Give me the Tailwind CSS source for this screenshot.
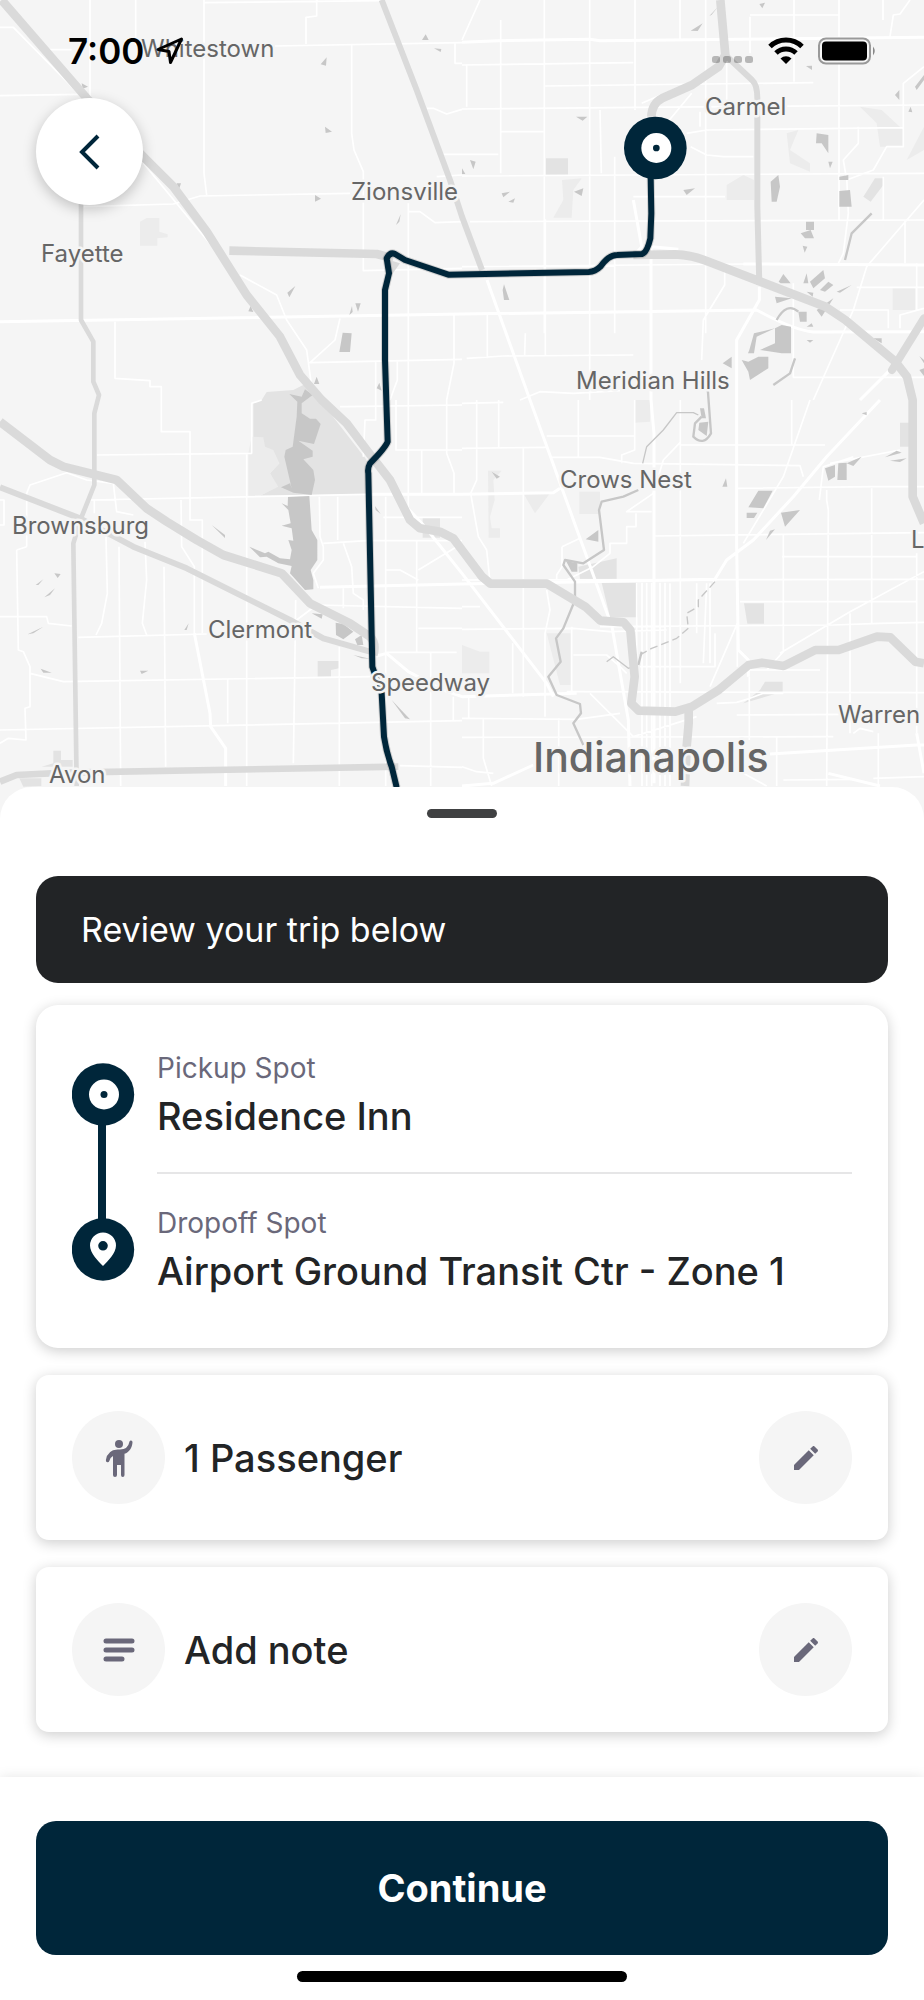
<!DOCTYPE html>
<html lang="en">
<head>
<meta charset="utf-8">
<meta name="viewport" content="width=device-width, initial-scale=1">
<title>Review your trip</title>
<script src="https://cdn.jsdelivr.net/npm/@tailwindcss/browser@4"></script>
</head>
<body class="bg-white font-['Inter','Liberation_Sans',sans-serif] text-[#222426]">
<main class="relative flex min-h-screen flex-col">

  <section class="relative h-[819px] w-full overflow-hidden bg-[#f5f5f5]" aria-label="Trip map">
    <svg class="block h-full w-full" viewBox="0 0 924 819" preserveAspectRatio="xMidYMin slice" role="img" aria-label="Route from Carmel towards the airport">
      <g transform="scale(.333333)" fill="none" stroke-linejoin="round">
        <!-- parks -->
        <g fill="#ececec">
          <path d="M420 665L440 654H478V695L503 703V712L472 715V737H420Z"/>
          <path d="M1686 540L1745 535 1720 570 1715 653H1660L1690 600Z"/>
          <path d="M2180 555L2230 525 2262 540V600H2180ZM2360 400L2395 390 2370 450 2430 490V515L2370 490ZM2580 320L2645 330 2710 390V440H2640L2630 370ZM2678 865H2745V930H2678ZM2720 480L2772 380V450Z"/>
          <path d="M1464 1412H1505L1480 1440 1484 1500 1470 1550 1475 1585H1500V1613H1466ZM1570 1480H1650L1605 1540ZM1738 1475H1800V1542H1738ZM1904 1200H1950V1265L1904 1268ZM1386 1935L1440 1955H1468V2020H1386ZM1640 1900H1712V2055H1680Z"/>
        </g>
        <g fill="#e3e3e3">
          <path d="M785 1200L800 1176 880 1170 920 1150 960 1200 1100 1380V1483L780 1487 830 1460 810 1420 838 1390 760 1310V1210Z"/>
          <path d="M1268 1552H1320V1613H1268ZM953 1983H1017V2005L993 2010V2030H953ZM160 2252H183V2280H218V2300H125L160 2290ZM58 2335H124V2358L70 2360Z"/>
          <path d="M1638 475H1704V524H1638ZM2590 590L2625 535H2650V555L2612 605ZM1735 1700L1850 1675V1737H1740ZM1805 1748H1912V1852H1830ZM2232 1810H2292V1871H2242ZM2280 2070L2295 2045H2348V2075L2230 2110ZM2700 1268H2740V1340H2700Z"/>
        </g>
        <path fill="#ececec" d="M755 1310L790 1312 795 1340 820 1350 838 1390 810 1420 835 1460 780 1487 745 1487V1360Z"/>

        <!-- minor streets -->
        <g stroke="#fff" stroke-width="5">
          <path d="M0 82H40L240 285M150 149H215M270 0V290M407 0V135M612 0V520L620 585M612 8L1140 2M950 0V48L918 52V132M825 138L1386 128M1055 132V400L1062 450 1090 515V812L1386 805M0 287L240 283M250 620L520 612 600 588 1050 580M430 490L650 755M720 825L830 885 860 960 920 1050 935 1160M345 965V1135L450 1142V1160H484V1295H570V1560H607V1900M1020 955L1005 1020 930 1088 1386 1078M1225 610V1550M1225 635H1260L1305 668 1386 665M1280 325H1300L1340 342 1386 328M1365 128V190H1386M1330 463H1386M1362 945V1090L1340 1200V1360L1362 1420V1480M1127 1085V1260H1095L1090 1370M1192 1085V1140L1170 1200M1188 1200V1350H1386M1310 530L1386 525"/>
          <path d="M1386 195L1900 188M1400 195V320M1636 258L2440 248M1386 327L1910 322 2772 315M1503 395H1630M1502 60V520M1633 0V1000M1386 463H1495M1386 528L2772 520M1800 330L1804 520M1769 0V1200M1844 470V1000M1905 0V330M1900 590H2175M2040 0V120M2117 0V1000M2180 120V320M2250 45H2515M2250 160V50M2517 0V660M2382 0V245M2649 0V60M1410 665L2772 660M1636 658V1065M1386 800L2240 792M1400 1075L1510 1068 1900 1065M1462 945V1075M1576 1000 1574 1065M2060 400L2120 390 2710 383M2072 440L2120 465 2170 470H2260M2075 280L2000 370M1925 310L2030 265M2100 335V380M2174 790V855L2110 960 2105 1080M1386 120L1440 0M2772 200L2710 250 2710 440H2660L2620 510 2540 540 2530 480 2575 430V380M2540 530L2545 640 2530 760 2515 790M2650 530V660M2772 600L2600 800 2560 930 2440 1200M2570 862H2772M2520 930H2665V985M2700 985V945L2772 925M2380 850V1130M2378 1132H2772M2670 110L2680 45 2700 42 2730 0M2715 660V790M2750 790V930M1560 1200L1620 1175 1720 1180 1860 1172"/>
          <path d="M0 1500H12V1575H0M80 1640V1480L90 1455 200 1418 260 1440 340 1450 350 1535 400 1545M290 1365L755 1360V1210L785 1200M270 1500L1100 1483M740 1360V2358M543 1500L545 1640 583 1700V1900M283 1500V1540M50 1650 80 1640M50 1650 55 1950 70 1955 90 2000V2120L75 2125 78 2220 25 2215 0 2230M0 1850H140L145 1870 215 1878M318 1610L322 1780 305 1870 288 1905M357 1640 362 2358M435 1625 440 1740 427 1870 440 1905M492 1700 497 2300M235 1912 620 1902M90 2020 190 2045 1110 2030M0 2190 1386 2162M683 2035V2170M887 1800 885 1960 880 2290M1018 1940V2358M890 1860 950 1815 1386 1825M958 1490 960 1610 970 1640V1680L940 1720 955 1765M1013 1490V1620M970 1630 1100 1622M1030 1630 1055 1700 1060 1780 1090 1800V1830M1030 1765V1825M1157 1490V2358M1150 1552H1386M1265 1350V1480M1020 1220 1040 1220 1386 1215M1250 1620V1955M1100 1622H1386M1157 1710H1200L1255 1740M1370 1640 1255 1710M1255 1885H1386M1160 1957H1370M1292 1957V2358M1360 2090V2160M1200 2297 1386 2302"/>
          <path d="M1430 1200V1440L1412 1480 1435 1610 1460 1650 1470 1745M1386 1345 1640 1342M1496 1200V1342M1386 1210 1510 1207M1570 1345V2090M1640 1308H1905M1656 1372H1800L1900 1390 2400 1397 2410 1430M1735 1200V1370M1904 1200V1350L1865 1365V1390M2041 1200V2050M2375 1200V1335M2040 1335H2475M2040 1328 1990 1380 1960 1480 1880 1535H1955M2210 1465 2620 1460M2430 1200 2350 1430 2230 1630M2620 1460H2772M2615 1465V1870M2480 1470V1500L2485 1530 2480 2358M2490 1390 2700 1350M2458 1500 2470 1400 2560 1370M2350 1605V1955L2300 2010M2346 1670H2750M2750 1660V2200M1908 1540V1580H1880V1630H1830V1660L1780 1700 1700 1740M1686 1640 1740 1615M1686 1640V1700L1670 1725V1740M1960 1608 2772 1598M1386 1740 2772 1738M2220 1805H2750M1800 1880 2500 1875 2640 1870 2772 1867M1386 1888 1720 1885 1830 1895 2000 1890M1386 1820H1440M1538 1930V2080M1640 1770 1650 1830 1635 1900V2150M1715 1880V2075M1720 1965H1820L1860 2000 1880 2020M2130 1750V1990M2120 1750 2110 1990M2010 1750V2358M2090 1750V1900M2212 2000V1870L2130 2060M1920 2000H2145V1900M1926 1748V2358M1940 1748V2358M1955 1748V2358M1980 1748V2358M1995 1748V2358M1910 1748V2000M1700 2075 2772 2078M1770 2080 1900 2210 2090 2150M1386 2155 1730 2158 1860 2140M1386 2212 2500 2210M1386 2300 1430 2315 1480 2320M1450 2158V2275L1475 2358M1676 2155V2358M1406 2090V2158M2248 2030V2220M2330 2210V2358M2340 1960 2550 1835 2772 1715M2550 1840V2200M2635 2200V2358M2460 2010 2230 2010 2180 2060M2210 2145 2560 2143M2150 2110 2210 2107 2250 2095 2290 2080H2350M2560 2200 2580 2185 2620 2195M2350 2340 2560 2338M2230 2320 2300 2358M2620 2335 2772 2330"/>
        </g>
        <!-- wider streets -->
        <g stroke="#fff" stroke-width="9">
          <path d="M0 965L1386 942 2270 930Q2380 990 2440 996L2772 995M1386 127L1495 122 1770 118 1800 122 2772 112M1461 840L1590 1200 1836 1880 1885 2160 1890 2358M2230 792 2772 795M2278 860V900L2210 1020V1640L2215 1950 2245 1980V2030M2640 1200 2480 1370 2380 1490 2260 1620 2180 1680 2140 1745M2580 1200 2690 1090M1953 740V1200L1962 1300V2350M1100 1483H1386L1660 1478 1680 1465M960 1762 1386 1752 2150 1738M583 1900 630 2140 632 2180 677 2245V2358M1200 1500 1270 1575 1386 1720 1640 2050 1660 2090M1130 1968 1160 1960 1225 2015 1330 2070 1386 2090 1730 2080M1386 2358 1480 2350 1600 2295M2485 2320 2640 2358M2310 2262 2750 2235 2772 2235M2750 2200 2772 2320M1900 600 1925 740 1900 770M1955 740 2035 748"/>
        </g>

        <!-- water -->
        <g fill="#c7c7c7">
          <path d="M868 1182 905 1190 915 1168 938 1185 905 1210V1240L930 1256H948L962 1272 942 1332 895 1322 938 1352V1370L910 1378 940 1410 945 1440 935 1485 880 1478 843 1462 870 1450 875 1465 853 1370 857 1350 878 1340 890 1250 892 1205Z"/>
          <path d="M864 1491 928 1488 935 1590 952 1620V1680L932 1710 940 1740V1768L915 1770 870 1720 875 1698 835 1690 800 1670 780 1672 748 1640 795 1660 805 1655 840 1675 870 1678 875 1650 865 1620 880 1622 875 1585 845 1577 872 1570 865 1530 845 1510 863 1518Z"/>
          <path d="M1028 998 1055 1000 1050 1056H1018ZM862 878 886 858 868 892ZM962 193 980 172 978 197ZM975 380 996 395 977 399ZM1266 120 1277 103 1286 120ZM1302 145 1324 147 1322 156ZM245 250 264 260 248 266ZM945 585 963 596 945 605ZM530 550H543L537 568ZM745 934 752 918 760 936ZM942 1152 950 1130 958 1152ZM1066 910H1082L1074 935ZM1048 945 1056 918 1058 936ZM1188 675 1202 643 1198 665ZM1130 1165 1138 1148 1145 1172Z"/>
          <path d="M1996 93ZM2128 48 2154 20 2135 44ZM2072 92 2108 70 2093 93ZM2278 12 2295 8 2287 25ZM1728 350H1762L1748 362ZM1722 575 1750 565 1745 588ZM2050 570 2085 565 2060 585ZM1386 505 1396 522H1386ZM1410 480 1427 485 1420 508ZM1505 580 1530 575 1510 592ZM1525 605 1545 595 1540 608ZM1508 870 1512 853 1528 900H1512ZM2312 545 2335 525 2340 560 2330 605H2315ZM2450 400 2485 405V460L2465 430 2448 430ZM2485 485H2498L2490 505ZM2518 530 2545 525V540H2518ZM2518 573 2550 570 2555 620H2518ZM2418 665H2442V690H2418ZM2402 700 2432 690 2442 715H2415ZM2408 737 2422 740 2414 758ZM2745 260 2772 225V240L2750 270ZM2685 285 2698 270V300ZM2725 335 2732 320 2737 337ZM2418 198 2436 197V210Z"/>
          <path d="M2336 845 2350 822 2372 850H2342ZM2410 850 2420 820 2425 850ZM2430 845 2470 810 2475 835 2440 865ZM2460 870 2485 845 2500 855 2475 875ZM2325 890 2375 895 2330 910ZM2420 875 2440 878 2438 890ZM2450 930 2500 895 2465 950ZM2395 935H2420V965H2400ZM2420 980 2435 970 2440 980ZM2325 985 2345 975 2373 980V1060H2345L2280 1050 2325 1030ZM2248 1050 2262 1000 2325 985 2270 1010 2262 1060H2244ZM2225 1080 2245 1085 2275 1070H2305V1105L2250 1140 2245 1115ZM2168 1090 2195 1070V1105ZM2420 1020H2440L2430 1028ZM2620 1015H2645V1030ZM2510 875 2555 855 2520 878ZM2758 1068 2772 1080V1090ZM2758 1110 2772 1105V1128Z"/>
          <path d="M635 1575 675 1605V1614ZM107 1755 130 1738 115 1755ZM133 1792 165 1765 150 1785ZM163 1720 182 1722 173 1734ZM83 1903 130 1880 100 1900ZM122 2006 155 2018H130ZM420 2012H445L425 2022ZM553 1890 566 1870 560 1890ZM1007 1868 1030 1872 1060 1895 1030 1918 1008 1905ZM1065 1918 1085 1905 1090 1935H1072ZM935 1840 968 1843 965 1856ZM1175 2100 1230 2158 1215 2155ZM1310 2183 1386 2215ZM1125 1518 1142 1542 1127 1530ZM1060 1965 1110 1976 1085 1975Z"/>
          <path d="M1698 1683 1732 1690V1715H1715ZM1757 1618 1795 1590V1625ZM2245 1522 2275 1472H2318L2290 1525ZM2240 1538H2272L2262 1554H2240ZM2343 1538 2400 1530 2355 1580ZM2298 1620 2310 1592 2325 1588ZM2475 1405 2505 1395V1430L2485 1442ZM2515 1390 2540 1388V1440H2512ZM2540 1390 2585 1370 2560 1398ZM2655 1372 2690 1352 2705 1358ZM2670 1382 2720 1375 2700 1386ZM1475 1415 1500 1430 1490 1436ZM2100 1225H2112L2118 1255H2105ZM2098 1268 2125 1265 2120 1308 2095 1290ZM2167 1460 2178 1435 2182 1460ZM2585 1240 2600 1236V1246Z"/>
        </g>
        <g stroke="#c7c7c7" stroke-width="7">
          <path d="M2122 1150 2133 1300Q2110 1340 2080 1310L2085 1270 2105 1250M1915 1470 1870 1490 1805 1505 1797 1530 1812 1650 1750 1690 1695 1680 1690 1695 1725 1745V1800L1690 1885 1668 1915 1682 1985 1645 2030 1670 2085 1740 2112 1743 2140 1720 2170 1750 2235M1915 1995 1925 1955M2615 640 2555 700 2535 780M2330 960Q2360 905 2395 935M2385 1075 2370 1120 2320 1155"/>
          <path stroke-width="4" d="M2095 1245 2080 1238 2030 1238 1990 1290 1940 1340 1928 1390M1820 1985 1840 1970 1885 2005 1900 2000"/>
          <path stroke-width="4" stroke-dasharray="24 12" d="M2145 1745 2095 1800V1820L2060 1840 2065 1885 2030 1915 1955 1945 1920 1965"/>
        </g>

        <!-- highways -->
        <g stroke="#dadada">
          <path stroke-width="26" d="M5 0L265 300 440 480 520 560 620 695 740 885 840 1010 900 1125 965 1200 1040 1270 1100 1350 1170 1440 1230 1560 1260 1585 1320 1595 1360 1615 1386 1650 1446 1730 1471 1751H1641L1756 1820 1801 1862 1871 1867 1891 1890 1904 2030 1894 2110 1916 2132 2026 2135 2076 2120 2156 2070 2246 1995 2286 1988 2351 1998 2446 1950 2516 1950 2631 1910 2671 1912 2746 1985 2772 1990"/>
          <path stroke-width="26" d="M688 752L1130 762 1180 775M1900 765L2026 763Q2076 765 2126 785L2476 920 2536 960 2686 1085 2721 1130 2738 1200V1490L2772 1570M2161 0L2176 165 2156 200 2076 255 1986 295Q1956 310 1954 350M2066 2120V2170L2060 2240 2055 2358M0 1265L150 1380 190 1400 350 1440 440 1525 500 1565 590 1620 670 1665 845 1720 930 1810 1050 1870 1110 1910Q1130 1930 1120 1965"/>
          <path stroke-width="24" stroke-linecap="round" d="M2676 1110L2772 955"/>
          <path stroke-width="18" d="M1145 0L1250 270 1350 540 1386 650 1446 810M2176 165L2256 240Q2273 255 2272 300V620L2278 855M0 1462L240 1555 400 1640 560 1705 870 1860 970 1915 1110 1955"/>
          <path stroke-width="20" d="M0 2345L50 2325 200 2318 1195 2300"/>
          <path stroke-width="14" d="M243 610V960L280 1025V1145L297 1185 283 1240V1455L245 1550 220 1630 230 2358"/>
        </g>
        <path fill="#dadada" d="M1150 775 1200 790 1175 825Z"/>

        <!-- trip route -->
        <path stroke="#000" stroke-opacity=".15" stroke-width="24" d="M1190 2362L1175 2300Q1160 2260 1152 2210L1145 2080 1117 2000 1105 1420Q1102 1405 1110 1390 1155 1345 1163 1325L1155 1080V870L1167 820 1160 775Q1170 755 1185 762L1215 780 1345 824 1766 816Q1786 815 1801 800 1826 765 1851 765L1926 762Q1941 758 1951 715L1954 640 1952 530"/>
        <path stroke="#00263a" stroke-width="18" d="M1190 2362L1175 2300Q1160 2260 1152 2210L1145 2080 1117 2000 1105 1420Q1102 1405 1110 1390 1155 1345 1163 1325L1155 1080V870L1167 820 1160 775Q1170 755 1185 762L1215 780 1345 824 1766 816Q1786 815 1801 800 1826 765 1851 765L1926 762Q1941 758 1951 715L1954 640 1952 530"/>
        <circle cx="1966" cy="444" r="94" fill="#00263a"/>
        <circle cx="1969" cy="444" r="45" fill="#fff"/>
        <circle cx="1969" cy="444" r="10" fill="#00263a"/>
      </g>
      <g font-size="24" fill="#666" stroke="#f5f5f5" stroke-width="5" stroke-linejoin="round" paint-order="stroke">
        <text x="141" y="57">Whitestown</text>
        <text x="351" y="200">Zionsville</text>
        <text x="41" y="262">Fayette</text>
        <text x="705" y="115">Carmel</text>
        <text x="576" y="389">Meridian Hills</text>
        <text x="560" y="488">Crows Nest</text>
        <text x="12" y="534">Brownsburg</text>
        <text x="208" y="638">Clermont</text>
        <text x="371" y="691">Speedway</text>
        <text x="838" y="723">Warren</text>
        <text x="49" y="783">Avon</text>
        <text x="911" y="548">L</text>
        <text x="533" y="772" font-size="41" font-weight="500">Indianapolis</text>
      </g>
    </svg>

    <!-- status bar -->
    <div class="absolute inset-x-0 top-0 flex items-center justify-between pt-[29px] pr-[46px] pl-[68px] text-black">
      <div class="flex items-center gap-3">
        <time class="text-[35px] leading-[44px] font-semibold">7:00</time>
        <svg class="h-7 w-7" viewBox="0 0 28 28" fill="none" stroke="#000" stroke-width="3" stroke-linejoin="round" aria-hidden="true"><path d="M25.500 2L2 12.500 13 14.500 14.500 25.500Z"/></svg>
      </div>
      <div class="flex items-center gap-[14px]">
        <svg class="h-7 w-[42px]" viewBox="0 0 42 28" fill="#000" fill-opacity=".25" aria-hidden="true"><rect y="19" width="8" height="7" rx="2.500"/><rect x="11" y="19" width="8" height="7" rx="2.500"/><rect x="22" y="19" width="8" height="7" rx="2.500"/><rect x="33" y="19" width="8" height="7" rx="2.500"/></svg>
        <svg class="h-7 w-9" viewBox="0 0 36 28" aria-hidden="true"><g fill="none" stroke="#000" stroke-width="5"><path d="M2 9.500A23 23 0 0 1 34 9.500"/><path d="M8 16A14.500 14.500 0 0 1 28 16"/></g><path d="M18 27L12.500 21.500A8 8 0 0 1 23.500 21.500Z"/></svg>
        <svg class="h-7 w-[60px]" viewBox="0 0 60 28" aria-hidden="true"><rect x="1" y="1.500" width="51" height="25" rx="7" fill="#f5f5f5" stroke="#999" stroke-width="2"/><rect x="4" y="4.500" width="45" height="19" rx="4"/><path d="M55 9.500Q58.500 14 55 18.500Z" fill="#888"/></svg>
      </div>
    </div>

    <button type="button" aria-label="Back" class="absolute top-[98px] left-9 flex h-[107px] w-[107px] items-center justify-center rounded-full bg-white shadow-[0_4px_14px_rgba(0,0,0,0.22)]">
      <svg class="h-10 w-10" viewBox="0 0 40 40" fill="none" stroke="#00263a" stroke-width="4" stroke-linejoin="miter" aria-hidden="true"><path d="M28 4L12 20L28 36"/></svg>
    </button>
  </section>

  <section class="relative -mt-8 flex flex-1 flex-col rounded-t-[32px] bg-white px-9 pb-[45px]">
    <div class="mx-auto mt-[22px] h-[9px] w-[70px] rounded-full bg-[#404142]"></div>
    <h1 class="mt-[58px] rounded-[22px] bg-[#222426] px-[45px] py-[30px] text-[34px] leading-[47px] font-normal text-white">Review your trip below</h1>

    <div class="mt-[22px] flex gap-[22px] rounded-[22px] bg-white px-9 pt-[43px] pb-[52px] shadow-[0_3px_14px_rgba(0,0,0,0.2)]">
      <svg class="mt-[15px] h-[218px] w-[63px] shrink-0" viewBox="0 0 63 218" aria-hidden="true">
        <path d="M26 31H34V187H26Z" fill="#00263a"/>
        <circle cx="31" cy="31.500" r="31.200" fill="#00263a"/><circle cx="32" cy="31.500" r="15" fill="#fff"/><circle cx="32" cy="31.500" r="3.500" fill="#00263a"/>
        <circle cx="31" cy="186.500" r="31.200" fill="#00263a"/>
        <path fill="#fff" fill-rule="evenodd" d="M31 203C26 198 18 190 18 182.500A13 13 0 0 1 44 182.500C44 190 36 198 31 203ZM31 178A4.800 4.800 0 1 0 31 187.600A4.800 4.800 0 1 0 31 178Z"/>
      </svg>
      <dl class="min-w-0 flex-1">
        <div class="border-b-2 border-[#e6e6e7] pb-[31px]">
          <dt class="text-[28px] leading-10 text-[#6a687a]">Pickup Spot</dt>
          <dd class="mt-[3px] text-[38px] leading-[50px] font-medium">Residence Inn</dd>
        </div>
        <div class="pt-[29px]">
          <dt class="text-[28px] leading-10 text-[#6a687a]">Dropoff Spot</dt>
          <dd class="mt-[3px] text-[38px] leading-[50px] font-medium">Airport Ground Transit Ctr - Zone 1</dd>
        </div>
      </dl>
    </div>

    <div class="mt-[27px] flex items-center rounded-[13px] bg-white p-9 shadow-[0_3px_14px_rgba(0,0,0,0.2)]">
      <span class="flex h-[93px] w-[93px] items-center justify-center rounded-full bg-[#f5f5f5]">
        <svg class="h-10 w-10" viewBox="0 0 40 40" fill="#6a687a" aria-hidden="true"><circle cx="20" cy="6" r="4"/><path d="M30.500 3.500Q31 2.500 32 2.600 33.600 2.800 33.500 4.500C33 10 30 14.500 25.500 15.800V37Q25.500 39 23.700 39 22 39 22 37V27H18V37Q18 39 16 39 14 39 14 37V18Q11 19.500 10.300 23 9.800 24.600 8.300 24.300 6.500 24 6.900 22 8.500 12 18.500 11.500H21Q29 11.500 30.500 3.500Z"/></svg>
      </span>
      <span class="ml-[19px] flex-1 text-[38px] leading-[50px] font-medium">1 Passenger</span>
      <button type="button" aria-label="Edit passengers" class="flex h-[93px] w-[93px] items-center justify-center rounded-full bg-[#f5f5f5]">
        <svg class="h-8 w-8" viewBox="0 0 24 24" fill="#6a687a" aria-hidden="true"><path d="M3 17.250V21h3.750L17.810 9.940l-3.750-3.750L3 17.250zM20.710 7.040c.39-.39.39-1.020 0-1.410l-2.340-2.340c-.39-.39-1.020-.39-1.410 0l-1.830 1.830 3.750 3.750 1.830-1.830z"/></svg>
      </button>
    </div>

    <div class="mt-[27px] flex items-center rounded-[13px] bg-white p-9 shadow-[0_3px_14px_rgba(0,0,0,0.2)]">
      <span class="flex h-[93px] w-[93px] items-center justify-center rounded-full bg-[#f5f5f5]">
        <svg class="h-8 w-8" viewBox="0 0 32 32" stroke="#6a687a" stroke-width="5" stroke-linecap="round" aria-hidden="true"><path d="M3 7H29M3 16H29M3 25H19"/></svg>
      </span>
      <span class="ml-[19px] flex-1 text-[38px] leading-[50px] font-medium">Add note</span>
      <button type="button" aria-label="Edit note" class="flex h-[93px] w-[93px] items-center justify-center rounded-full bg-[#f5f5f5]">
        <svg class="h-8 w-8" viewBox="0 0 24 24" fill="#6a687a" aria-hidden="true"><path d="M3 17.250V21h3.750L17.810 9.940l-3.750-3.750L3 17.250zM20.710 7.040c.39-.39.39-1.020 0-1.410l-2.340-2.340c-.39-.39-1.020-.39-1.410 0l-1.830 1.830 3.750 3.750 1.830-1.830z"/></svg>
      </button>
    </div>
  </section>

  <footer class="relative bg-white px-9 pt-11 pb-[18px] shadow-[0_0_12px_rgba(0,0,0,0.1)]">
    <button type="button" class="block w-full rounded-[20px] bg-[#00263a] py-[42px] text-[38px] leading-[50px] font-bold text-white">Continue</button>
    <div class="mx-auto mt-4 h-[11px] w-[330px] rounded-full bg-black"></div>
  </footer>
</main>
</body>
</html>
